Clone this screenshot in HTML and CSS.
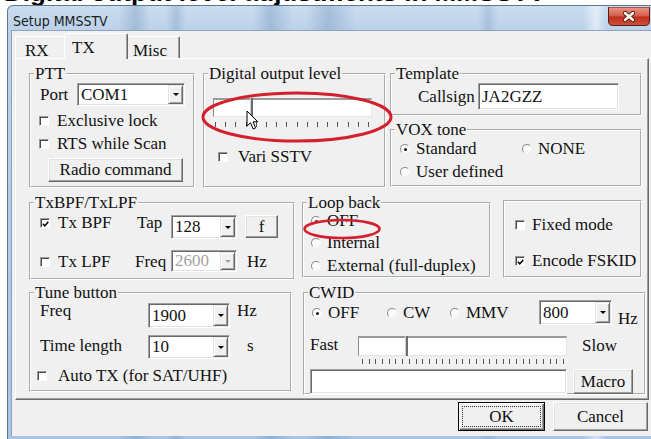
FILE: index.html
```html
<!DOCTYPE html>
<html>
<head>
<meta charset="utf-8">
<title>Setup MMSSTV</title>
<link rel="stylesheet" href="styles.css">
</head>
<body>
<div class="caption"><div class="caption-text">Digital output level adjustments in MMSSTV</div></div>
<div class="window">
  <div class="titlebar">
    <span class="title">Setup MMSSTV</span>
    <svg class="close-btn" width="42" height="19" viewBox="0 0 42 19">
      <defs>
        <linearGradient id="closeFill" x1="0" y1="0" x2="0" y2="1">
          <stop offset="0" stop-color="#e8998a"/>
          <stop offset="0.45" stop-color="#d7634d"/>
          <stop offset="0.55" stop-color="#be2f1d"/>
          <stop offset="1" stop-color="#d0513a"/>
        </linearGradient>
      </defs>
      <path d="M0.5 0 H41.5 V14 Q41.5 18.5 37 18.5 H5 Q0.5 18.5 0.5 14 Z" fill="url(#closeFill)" stroke="#5a1e15" stroke-width="1"/>
      <path d="M17 6 L25 13 M25 6 L17 13" stroke="#5e1d13" stroke-width="4.4" stroke-linecap="round"/>
      <path d="M17 6 L25 13 M25 6 L17 13" stroke="#fff" stroke-width="2.4" stroke-linecap="round"/>
    </svg>
  </div>
  <div class="client">
    <div class="tabs">
      <div class="tab tab-rx">RX</div>
      <div class="tab tab-tx">TX</div>
      <div class="tab tab-misc">Misc</div>
    </div>
    <div class="page">
      <div class="row row1">
        <fieldset class="group g-ptt">
          <legend>PTT</legend>
          <div class="port-row"><span class="port-label">Port</span><div class="combo c-port"><span class="combo-value">COM1</span><span class="drop"></span></div></div>
          <label class="check ptt-check1"><span class="cbox"></span>Exclusive lock</label>
          <label class="check ptt-check2"><span class="cbox"></span>RTS while Scan</label>
          <button class="btn btn-radio">Radio command</button>
        </fieldset>
        <fieldset class="group g-digital">
          <legend>Digital output level</legend>
          <div class="track t-digital"><span class="thumb" style="margin-left:36px"></span></div>
          <div class="ticks ticks-digital"></div>
          <label class="check vari-check"><span class="cbox"></span>Vari SSTV</label>
        </fieldset>
        <div class="col-right">
          <fieldset class="group g-template">
            <legend>Template</legend>
            <div class="call-row"><span class="call-label">Callsign</span><div class="edit e-call">JA2GZZ</div></div>
          </fieldset>
          <fieldset class="group g-vox">
            <legend>VOX tone</legend>
            <div class="vox-row"><label class="radio r-standard"><span class="rbox on"></span>Standard</label><label class="radio"><span class="rbox"></span>NONE</label></div>
            <label class="radio r-user"><span class="rbox"></span>User defined</label>
          </fieldset>
        </div>
      </div>

      <div class="row row2">
        <fieldset class="group g-bpf">
          <legend>TxBPF/TxLPF</legend>
          <div class="bpf-row">
            <label class="check bpf-check"><span class="cbox on"><svg viewBox="0 0 8 8" width="8" height="8"><path d="M1 3.8 L3.2 6.2 L7.2 1.4" fill="none" stroke="#000" stroke-width="1.8"/></svg></span>Tx BPF</label>
            <span class="bpf-label">Tap</span>
            <div class="combo c-tap"><span class="combo-value">128</span><span class="drop"></span></div>
            <button class="btn btn-f">f</button>
          </div>
          <div class="lpf-row">
            <label class="check lpf-check"><span class="cbox"></span>Tx LPF</label>
            <span class="lpf-label">Freq</span>
            <div class="combo c-freq disabled"><span class="combo-value">2600</span><span class="drop"></span></div>
            <span class="unit-hz">Hz</span>
          </div>
        </fieldset>
        <fieldset class="group g-loop">
          <legend>Loop back</legend>
          <label class="radio loop-off"><span class="rbox on"></span>OFF</label>
          <label class="radio loop-int"><span class="rbox"></span>Internal</label>
          <label class="radio loop-ext"><span class="rbox"></span>External (full-duplex)</label>
        </fieldset>
        <fieldset class="group g-fixed">
          <label class="check fixed-check"><span class="cbox"></span>Fixed mode</label>
          <label class="check fsk-check"><span class="cbox on"><svg viewBox="0 0 8 8" width="8" height="8"><path d="M1 3.8 L3.2 6.2 L7.2 1.4" fill="none" stroke="#000" stroke-width="1.8"/></svg></span>Encode FSKID</label>
        </fieldset>
      </div>

      <div class="row row3">
        <fieldset class="group g-tune">
          <legend>Tune button</legend>
          <div class="tune-row">
            <span class="tune-label">Freq</span>
            <div class="combo c-tune1"><span class="combo-value">1900</span><span class="drop"></span></div>
            <span class="tune-hz">Hz</span>
          </div>
          <div class="tune-row tune-row2">
            <span class="tune-label">Time length</span>
            <div class="combo c-tune2"><span class="combo-value">10</span><span class="drop"></span></div>
            <span class="tune-s">s</span>
          </div>
          <label class="check auto-check"><span class="cbox"></span>Auto TX (for SAT/UHF)</label>
        </fieldset>
        <fieldset class="group g-cwid">
          <legend>CWID</legend>
          <div class="cw-row">
            <label class="radio cw-off"><span class="rbox on"></span>OFF</label>
            <label class="radio cw-cw"><span class="rbox"></span>CW</label>
            <label class="radio cw-mmv"><span class="rbox"></span>MMV</label>
            <div class="combo c-cw"><span class="combo-value">800</span><span class="drop"></span></div>
            <span class="cw-hz">Hz</span>
          </div>
          <div class="speed-row">
            <span class="speed-fast">Fast</span>
            <div class="track t-cw"><span class="thumb" style="margin-left:46px"></span></div>
            <span class="speed-slow">Slow</span>
          </div>
          <div class="ticks ticks-cw"></div>
          <div class="macro-row">
            <div class="edit e-macro"></div>
            <button class="btn btn-macro">Macro</button>
          </div>
        </fieldset>
      </div>
    </div>
    <div class="footer">
      <button class="btn btn-ok"><span class="focus">OK</span></button>
      <button class="btn btn-cancel">Cancel</button>
    </div>
  </div>

  <svg class="mark mark-level" width="200" height="56" viewBox="0 0 200 56"><ellipse cx="96" cy="27" rx="94" ry="24" fill="none" stroke="#d41f2d" stroke-width="3"/></svg>
  <svg class="mark mark-off" width="82" height="24" viewBox="0 0 82 24"><ellipse cx="40" cy="12" rx="37.5" ry="9" fill="none" stroke="#d41f2d" stroke-width="2.6"/></svg>
  <svg class="pointer" width="14" height="21" viewBox="0 0 14 21"><path d="M1 1 L1 16 L4.5 12.8 L7.2 19 L9.6 18 L7 11.8 L11.8 11.8 Z" fill="#fff" stroke="#000" stroke-width="1" stroke-linejoin="round"/></svg>
</div>
</body>
</html>
```

FILE: styles.css
```css
html, body {
  margin: 0;
  padding: 0;
}

body {
  width: 651px;
  height: 439px;
  overflow: hidden;
  background: #fff;
  font-family: "Liberation Serif", "Times New Roman", serif;
  font-size: 17px;
  color: #111;
}

/* heading line of the article above the dialog, mostly hidden */
.caption {
  height: 5px;
  overflow: hidden;
}

.caption-text {
  font: bold 26px/30px "Liberation Sans", Arial, sans-serif;
  margin-top: -23px;
  padding-left: 4px;
  white-space: nowrap;
  color: #000;
}

/* ---------- window frame ---------- */
.window {
  position: relative;
  margin-left: 7px;
  width: 652px;
  height: 434px;
  box-sizing: border-box;
  border: 1px solid #5d7896;
  border-bottom: none;
  border-radius: 6px 6px 0 0;
  background:
    linear-gradient(90deg,
      rgba(255,255,255,0) 0,
      rgba(96,132,176,0) 110px, rgba(96,132,176,.3) 128px, rgba(96,132,176,0) 142px,
      rgba(96,132,176,0) 158px, rgba(96,132,176,.28) 168px, rgba(96,132,176,0) 178px,
      rgba(96,132,176,0) 245px, rgba(96,132,176,.32) 262px, rgba(96,132,176,0) 285px,
      rgba(96,132,176,0) 298px, rgba(96,132,176,.32) 320px, rgba(96,132,176,0) 348px,
      rgba(96,132,176,0) 470px, rgba(96,132,176,.24) 480px, rgba(96,132,176,0) 490px,
      rgba(255,255,255,0) 575px, rgba(255,255,255,.5) 588px, rgba(255,255,255,0) 598px),
    linear-gradient(180deg, #cadcef 0, #bcd2ea 24px, #a9c4e1 100%);
  display: flex;
  flex-direction: column;
}

.titlebar {
  height: 24px;
  display: flex;
  align-items: flex-start;
  flex: none;
}

.title {
  padding: 7px 0 0 5px;
  font: 14px/16px "Liberation Sans Narrow", "DejaVu Sans Condensed", "Liberation Sans", Arial, sans-serif;
  color: #1b1b1b;
}

/* red caption-bar close button */
.close-btn {
  display: block;
  flex: none;
  margin: 1px 8px 0 auto;
}

.client {
  flex: 1;
  margin-left: 3px;
  box-sizing: border-box;
  border-top: 1px solid #8ea4bd;
  border-left: 1px solid #8ea4bd;
  background: #f0f0f0;
  padding: 2px 0 0 3px;
  margin-bottom: 3px;
}

/* ---------- tabs ---------- */
.tabs {
  height: 25px;
  display: flex;
  align-items: flex-end;
}

.tab {
  box-sizing: border-box;
  height: 22px;
  border: 1px solid;
  border-color: #fff #696969 transparent #fff;
  border-bottom: none;
  border-radius: 2px 2px 0 0;
  box-shadow: inset -1px 0 0 #a0a0a0;
  padding-top: 4px;
  line-height: 20px;
  background: #f0f0f0;
}

.tab-rx {
  width: 51px;
  padding-left: 9px;
}

.tab-tx {
  position: relative;
  z-index: 1;
  width: 64px;
  height: 26px;
  margin: 0 -2px -1px;
  padding-left: 7px;
}

.tab-misc {
  width: 54px;
  padding-left: 6px;
}

.page {
  width: 634px;
  height: 342px;
  box-sizing: border-box;
  border: 1px solid;
  border-color: #fff #696969 #696969 #fff;
  box-shadow: inset -1px -1px 0 #a0a0a0;
  padding: 6px 0 0 13px;
}

/* ---------- group boxes ---------- */
.row {
  display: flex;
  align-items: flex-start;
}

.row2 { margin-top: 6px; }
.row3 { margin-top: 4px; }

.group {
  margin: 0;
  padding: 0;
  min-width: 0;
  box-sizing: border-box;
  border: 2px groove #fff;
}

.group legend {
  padding: 0 1px;
  margin-left: 3px;
  line-height: 18px;
}

.g-ptt { width: 166px; height: 123px; }
.g-digital { width: 183px; height: 123px; margin-left: 8px; }
.col-right { width: 252px; margin-left: 4px; }
.g-template { width: 252px; height: 51px; }
.g-vox { width: 252px; height: 66px; margin-top: 5px; }

.g-bpf { width: 266px; height: 86px; }
.g-loop { width: 189px; height: 84px; margin-left: 7px; }
.g-fixed { width: 139px; height: 78px; margin: 6px 0 0 12px; }

.g-tune { width: 263px; height: 108px; }
.g-cwid { width: 343px; height: 111px; margin-left: 11px; }

/* ---------- common controls ---------- */
.check, .radio {
  display: flex;
  align-items: center;
  height: 20px;
  line-height: 20px;
  white-space: nowrap;
}

.cbox {
  flex: none;
  width: 10px;
  height: 10px;
  box-sizing: border-box;
  margin-right: 8px;
  border: 1px solid;
  border-color: #9a9a9a #fff #fff #9a9a9a;
  box-shadow: inset 1px 1px 0 #4a4a4a;
  background: #fff;
  display: flex;
  align-items: center;
  justify-content: center;
}

.cbox svg { display: block; margin: 1px 0 0 1px; }

.rbox {
  flex: none;
  width: 10px;
  height: 10px;
  box-sizing: border-box;
  margin-right: 6px;
  border-radius: 50%;
  border: 1px solid;
  border-color: #8c8c8c #f4f4f4 #f4f4f4 #8c8c8c;
  background: #fafafa;
  display: flex;
  align-items: center;
  justify-content: center;
}

.rbox.on::before {
  content: "";
  width: 3px;
  height: 3px;
  border-radius: 50%;
  background: #111;
}

.combo, .edit {
  box-sizing: border-box;
  background: #fff;
  border: 1px solid;
  border-color: #a0a0a0 #fff #fff #a0a0a0;
  box-shadow: inset 1px 1px 0 #696969, inset -1px -1px 0 #e3e3e3;
}

.combo {
  display: flex;
  padding: 1px;
}

.combo-value {
  flex: 1;
  display: flex;
  align-items: center;
  padding-left: 2px;
  line-height: 20px;
}

.drop {
  flex: none;
  width: 15px;
  box-sizing: border-box;
  background: #f0f0f0;
  border: 1px solid;
  border-color: #e3e3e3 #696969 #696969 #e3e3e3;
  box-shadow: inset 1px 1px 0 #fff, inset -1px -1px 0 #a0a0a0;
  display: flex;
  align-items: center;
  justify-content: center;
}

.drop::before {
  content: "";
  border-left: 3px solid transparent;
  border-right: 3px solid transparent;
  border-top: 3px solid #000;
}

.combo.disabled .combo-value { color: #a3a3a3; }
.combo.disabled .drop::before { border-top-color: #a3a3a3; }

.edit {
  display: flex;
  align-items: center;
  padding-left: 3px;
  line-height: 20px;
}

.btn {
  font: inherit;
  color: #111;
  box-sizing: border-box;
  background: #f0f0f0;
  border: 1px solid;
  border-color: #fff #696969 #696969 #fff;
  box-shadow: inset -1px -1px 0 #a0a0a0, inset 1px 1px 0 #e3e3e3;
  padding: 0;
  line-height: 20px;
}

/* ---------- PTT ---------- */
.port-row {
  display: flex;
  align-items: center;
  height: 23px;
}

.port-label { margin-left: 9px; width: 37px; line-height: 20px; }
.c-port { width: 108px; height: 23px; }
.ptt-check1 { margin: 5px 0 0 8px; }
.ptt-check2 { margin: 3px 0 0 8px; }
.btn-radio { display: block; margin: 4px 0 0 17px; width: 135px; height: 24px; }

/* ---------- trackbars ---------- */
.track {
  display: flex;
  box-sizing: border-box;
  background: #fff;
  border-top: 2px solid #9b9b9b;
  border-left: 1px solid #8a8a8a;
  border-right: 1px solid #e6e6e6;
  border-bottom: 1px solid #e6e6e6;
}

.thumb {
  flex: none;
  width: 3px;
  height: calc(100% + 3px);
  margin-top: -2px;
  box-sizing: border-box;
  border-left: 1px solid #cfcfcf;
  border-right: 2px solid #6d6d6d;
  background: #fff;
}

.t-digital { margin: 15px 0 0 8px; width: 159px; height: 19px; }

.ticks {
  height: 5px;
  background: repeating-linear-gradient(90deg, #555 0 1px, transparent 1px 10.2px);
}

.ticks-digital { margin: 5px 0 0 10px; width: 154px; }
.vari-check { margin: 20px 0 0 13px; }
.vari-check .cbox { margin-right: 10px; }

/* ---------- Template / VOX ---------- */
.call-row {
  display: flex;
  align-items: center;
  height: 27px;
  padding-left: 26px;
}

.call-label { width: 60px; line-height: 20px; }
.e-call { width: 141px; height: 27px; }

.vox-row { display: flex; margin-left: 8px; }
.r-standard { width: 122px; }
.r-user { margin: 3px 0 0 8px; }

/* ---------- TxBPF / TxLPF ---------- */
.bpf-row, .lpf-row {
  display: flex;
  align-items: flex-start;
}

.bpf-check { margin: 1px 0 0 9px; width: 97px; }
.bpf-label { margin-top: 1px; width: 34px; line-height: 20px; }
.c-tap { margin-top: 3px; width: 66px; height: 24px; }
.btn-f { margin: 3px 0 0 8px; width: 33px; height: 23px; }

.lpf-row { margin-top: 11px; }
.lpf-check { margin: 2px 0 0 9px; width: 95px; }
.lpf-label { margin-top: 2px; width: 36px; line-height: 20px; }
.c-freq { width: 66px; height: 22px; }
.unit-hz { margin: 2px 0 0 10px; line-height: 20px; }

/* ---------- Loop back ---------- */
.loop-off { margin: -1px 0 0 7px; }
.loop-int { margin: 2px 0 0 7px; }
.loop-ext { margin: 3px 0 0 7px; }

/* ---------- Fixed / FSKID ---------- */
.fixed-check { margin: 13px 0 0 10px; }
.fsk-check { margin: 16px 0 0 10px; }
.fixed-check .cbox, .fsk-check .cbox { margin-right: 7px; }

/* ---------- Tune button ---------- */
.tune-row {
  display: flex;
  align-items: flex-start;
}

.tune-label { margin: -1px 0 0 9px; width: 108px; line-height: 20px; }
.c-tune1 { margin-top: 1px; width: 82px; height: 25px; }
.tune-hz { margin: -1px 0 0 7px; line-height: 20px; }

.tune-row2 { margin-top: 7px; }
.tune-row2 .tune-label { margin-top: 1px; }
.c-tune2 { width: 82px; height: 24px; }
.tune-s { margin: 1px 0 0 17px; line-height: 20px; }

.auto-check { margin: 7px 0 0 6px; }
.auto-check .cbox { margin-right: 11px; }

/* ---------- CWID ---------- */
.cw-row {
  display: flex;
  align-items: flex-start;
}

.cw-off { margin: 1px 0 0 7px; width: 75px; }
.cw-cw { margin-top: 1px; width: 63px; }
.cw-mmv { margin-top: 1px; width: 89px; }
.c-cw { margin-top: -2px; width: 73px; height: 25px; }
.cw-hz { margin: 7px 0 0 6px; line-height: 20px; }

.speed-row {
  display: flex;
  align-items: flex-start;
  margin-top: 6px;
}

.speed-fast { margin-left: 5px; width: 48px; line-height: 20px; }
.t-cw { margin-top: 1px; width: 209px; height: 20px; }
.speed-slow { margin: 1px 0 0 15px; line-height: 20px; }

.ticks-cw {
  margin: 3px 0 0 57px;
  width: 202px;
  background: repeating-linear-gradient(90deg, #555 0 1px, transparent 1px 6.7px);
}

.macro-row {
  display: flex;
  margin-top: 5px;
}

.e-macro { margin-left: 5px; width: 257px; height: 25px; }
.btn-macro { margin-left: 6px; width: 60px; height: 25px; }

/* ---------- dialog buttons ---------- */
.footer {
  display: flex;
  padding: 2px 0 0 443px;
}

.btn-ok {
  width: 87px;
  height: 29px;
  border-color: #000;
  box-shadow: inset 1px 1px 0 #fff, inset -1px -1px 0 #696969, inset -2px -2px 0 #a0a0a0;
  padding: 3px;
}

.btn-ok .focus {
  display: flex;
  align-items: center;
  justify-content: center;
  height: 100%;
  box-sizing: border-box;
  border: 1px dotted #333;
}

.btn-cancel {
  margin-left: 8px;
  width: 95px;
  height: 29px;
}

/* ---------- annotations drawn over the dialog ---------- */
.mark, .pointer {
  position: absolute;
  pointer-events: none;
}

.mark-level { left: 193px; top: 84px; }
.mark-off { left: 294px; top: 211px; }
.pointer { left: 238px; top: 104px; }
```
